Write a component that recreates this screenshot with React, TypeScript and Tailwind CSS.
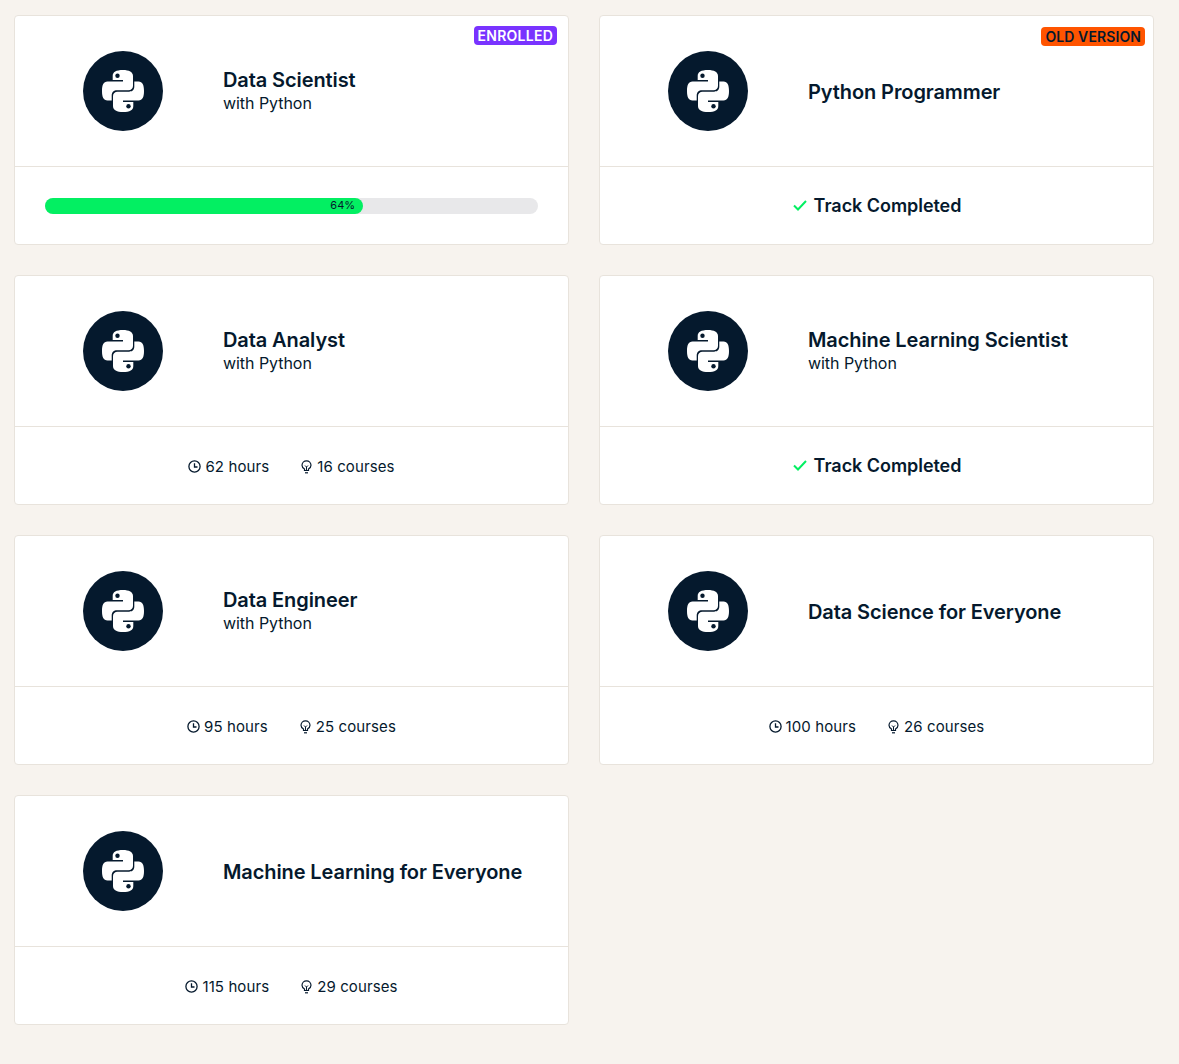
import React from "react";

type Track = {
  title: string;
  sub?: string;
  badge?: "enrolled" | "old";
  progress?: number;
  completed?: boolean;
  hours?: number;
  courses?: number;
};

const tracks: Track[] = [
  { title: "Data Scientist", sub: "with Python", badge: "enrolled", progress: 64 },
  { title: "Python Programmer", badge: "old", completed: true },
  { title: "Data Analyst", sub: "with Python", hours: 62, courses: 16 },
  { title: "Machine Learning Scientist", sub: "with Python", completed: true },
  { title: "Data Engineer", sub: "with Python", hours: 95, courses: 25 },
  { title: "Data Science for Everyone", hours: 100, courses: 26 },
  { title: "Machine Learning for Everyone", hours: 115, courses: 29 },
];

const snake =
  "M21 0C14 0 10.700 2 10.700 6V10H21V11.500H5.500C1.500 11.500 0 15 0 21C0 27 1.500 30.500 5.500 30.500H9.700V25.500C9.700 22 12 20.300 15 20.300H26.500C29 20.300 31 18.500 31 16V6C31 2 27 0 21 0z";

// same snake twice, turned half way round
const PythonIcon = () => (
  <svg width="42" height="42" viewBox="0 0 42 42">
    <path fill="#fff" d={snake} />
    <path fill="#fff" d={snake} transform="rotate(180 21 21)" />
    <circle cx="15.500" cy="5.800" r="2.200" fill="#05192d" />
    <circle cx="26.500" cy="36.200" r="2.200" fill="#05192d" />
  </svg>
);

const ClockIcon = () => (
  <svg width="13" height="13" viewBox="0 0 13 13" fill="none" stroke="#05192d" strokeWidth="1.3">
    <circle cx="6.500" cy="6.500" r="5.600" />
    <path d="M6.500 3.300V7H9.500" />
  </svg>
);

const BulbIcon = () => (
  <svg className="translate-y-[1px]" width="11" height="14" viewBox="0 0 11 14" fill="none" stroke="#05192d" strokeWidth="1.2">
    <path d="M3.500 9C2 8.200 1 6.900 1 5.300a4.500 4.500 0 0 1 9 0C10 6.900 9 8.200 7.500 9v1.500h-4z" />
    <path d="M4 12.800h3" />
    <path d="M4 5.500l1.500 1.500L7 5.500M5.500 7v3" strokeWidth="1" />
  </svg>
);

const CheckIcon = () => (
  <svg width="14" height="11" viewBox="0 0 14 11" fill="none" stroke="#03ef62" strokeWidth="2">
    <path d="M1 5.500L5 9.500L13 1" />
  </svg>
);

const Footer = ({ t }: { t: Track }) => {
  if (t.progress !== undefined) {
    return (
      <div className="mx-[30px] h-4 w-[493px] rounded-full bg-[#e8e8ea]">
        <div
          className="flex h-4 items-center justify-end rounded-full bg-[#03ef62] pr-2 text-[11px] text-[#05192d]"
          style={{ width: `${t.progress * 4.97}px` }}
        >
          {t.progress}%
        </div>
      </div>
    );
  }
  if (t.completed) {
    return (
      <div className="flex w-full items-center justify-center gap-[7px] pl-[1px] text-[18px] font-semibold tracking-[-0.05px]">
        <CheckIcon />
        <span>Track Completed</span>
      </div>
    );
  }
  return (
    <div className="flex w-full items-center justify-center gap-8 pt-[1px] text-[15px] tracking-[0.1px]">
      <span className="flex items-center gap-[4px]">
        <ClockIcon />
        <span className="translate-y-[1px]">{t.hours} hours</span>
      </span>
      <span className="flex items-center gap-[5px]">
        <BulbIcon />
        <span className="translate-y-[1px]">{t.courses} courses</span>
      </span>
    </div>
  );
};

const Card = ({ t }: { t: Track }) => (
  <div className="relative h-[230px] w-[555px] rounded border border-[#e8e3dc] bg-white">
    {t.badge === "enrolled" && (
      <span className="absolute right-[11px] top-[10px] rounded bg-[#7933ff] px-1 text-[14px] leading-[19px] font-semibold tracking-[0.25px] text-white">
        ENROLLED
      </span>
    )}
    {t.badge === "old" && (
      <span className="absolute right-2 top-[11px] rounded bg-[#ff5400] px-1 text-[14px] leading-[19px] font-semibold tracking-[0.1px] text-[#05192d]">
        OLD VERSION
      </span>
    )}
    <div className="flex h-[151px] items-center gap-[60px] border-b border-[#e8e3dc] pl-[68px]">
      <div className="flex h-20 w-20 items-center justify-center rounded-full bg-[#05192d]">
        <PythonIcon />
      </div>
      <div className={t.sub ? "pb-[2px]" : "pt-[2px]"}>
        <div className="text-[20px] leading-[25px] font-semibold tracking-[-0.1px]">{t.title}</div>
        {t.sub && <div className="text-[16px] leading-[20px] tracking-[-0.05px]">{t.sub}</div>}
      </div>
    </div>
    <div className="flex h-[77px] items-center">
      <Footer t={t} />
    </div>
  </div>
);

export default function App() {
  return (
    <div className="min-h-[1064px] bg-[#f7f3ee] pb-[39px] pl-[14px] pt-[15px] font-['Inter',sans-serif] text-[#05192d]">
      <div className="grid w-[1140px] grid-cols-2 gap-[30px]">
        {tracks.map((t) => (
          <Card key={t.title} t={t} />
        ))}
      </div>
    </div>
  );
}
